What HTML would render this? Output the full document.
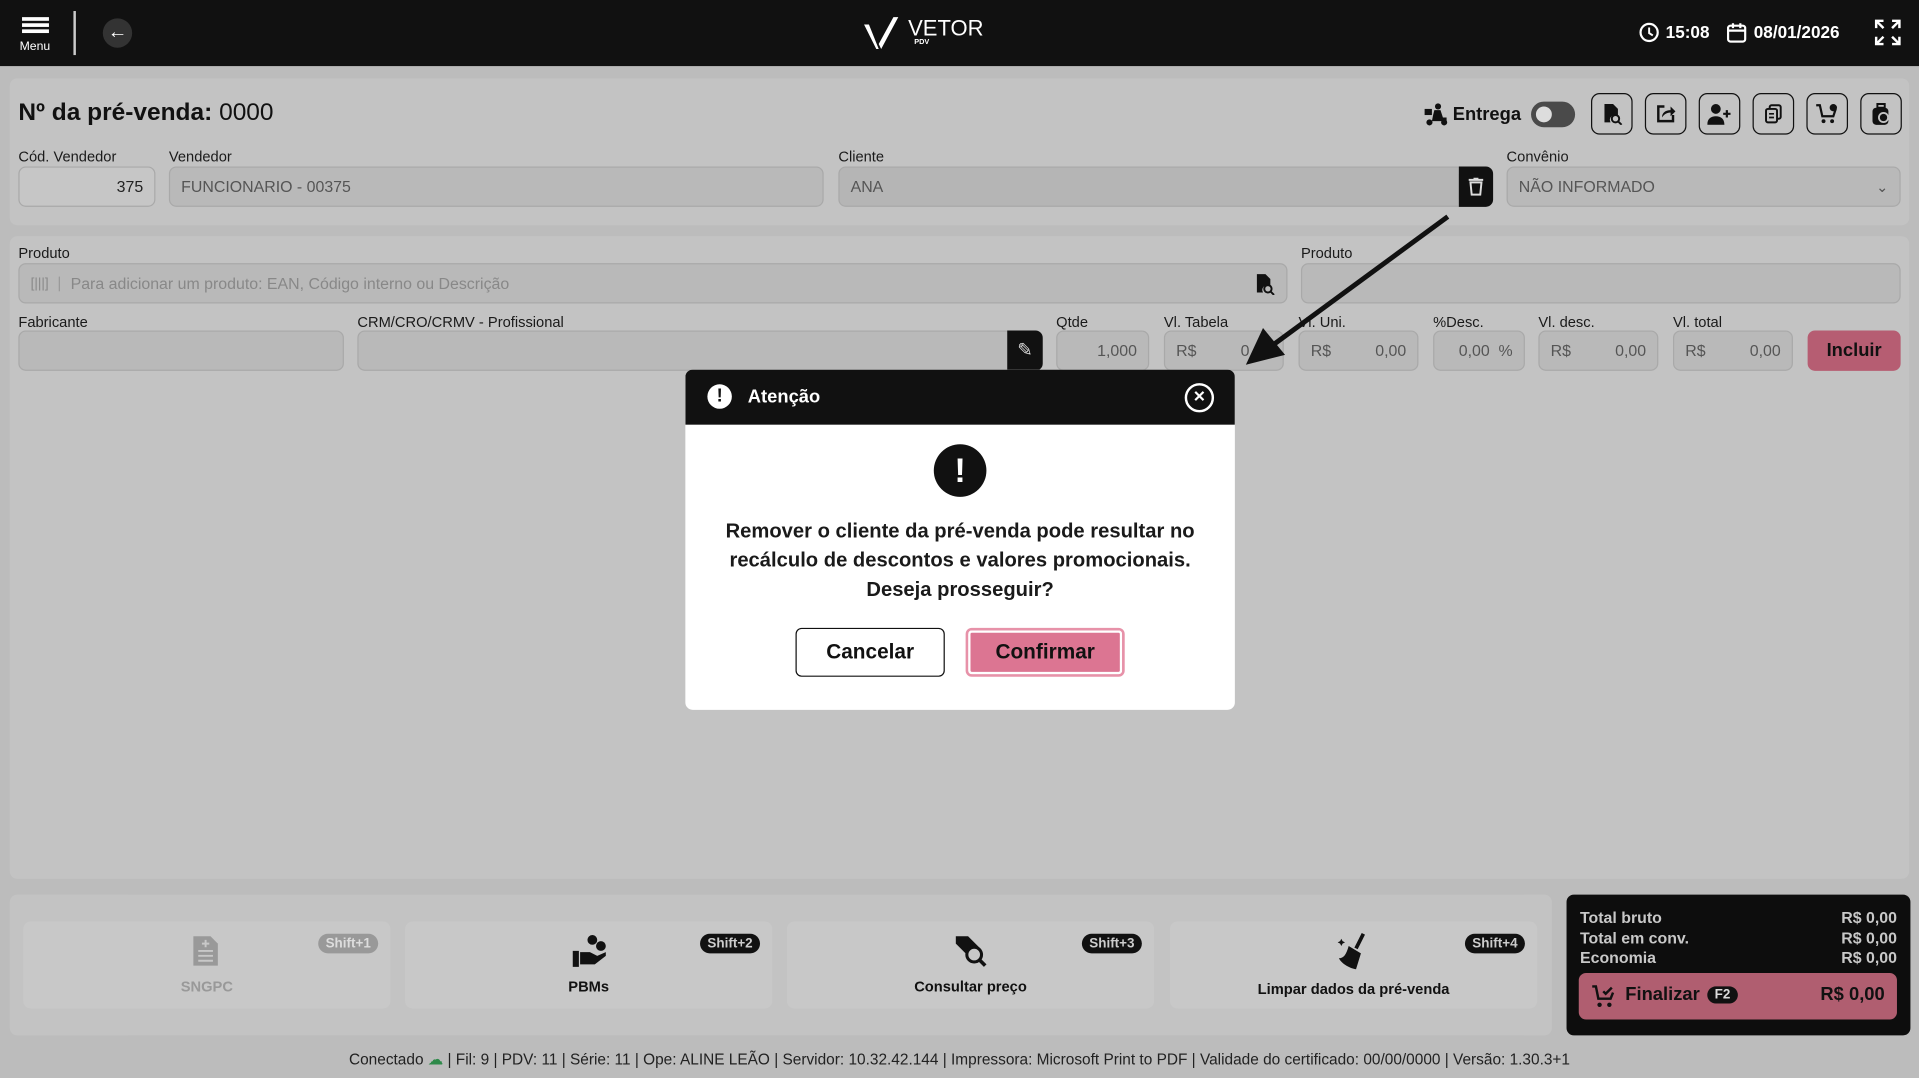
<!DOCTYPE html>
<html><head><meta charset="utf-8"><style>
*{box-sizing:border-box;margin:0;padding:0}
html,body{width:1919px;height:1078px;overflow:hidden;background:#bcbcbc}
#w{position:absolute;left:0;top:0;width:1568px;height:881px;transform:scale(1.22385);transform-origin:0 0;font-family:"Liberation Sans",sans-serif;color:#111;background:#bcbcbc}
.a{position:absolute}
.top{left:0;top:0;width:1568px;height:54px;background:#111;color:#fff}
.pn{background:#c3c3c3;border-radius:6px}
.lb{font-size:12px;color:#1a1a1a}
.in{border:1px solid #a9a9a9;background:#b9b9b9;border-radius:6px;font-size:13px;color:#555;padding:0 9px;display:flex;align-items:center}
.ib{width:34px;height:34px;border:1.5px solid #111;border-radius:7px;display:flex;align-items:center;justify-content:center}
.card{background:#c8c8c8;border-radius:6px;top:753px;height:71px;width:300px;font-size:12px;font-weight:bold;text-align:center}
.sh{position:absolute;top:10px;right:10px;background:#111;color:#ccc;font-size:11px;font-weight:bold;border-radius:9px;padding:2px 6px}
.card .t{position:absolute;left:0;right:0;top:46px}
</style></head><body><div id="w">
<div class="a top">
 <div class="a" style="left:18px;top:14px;width:22px;height:3px;background:#fff;box-shadow:0 5px 0 #fff,0 10px 0 #fff"></div>
 <div class="a" style="left:16px;top:33px;font-size:10px">Menu</div>
 <div class="a" style="left:60px;top:9px;width:2px;height:36px;background:#ccc"></div>
 <div class="a" style="left:84px;top:15px;width:24px;height:24px;border-radius:12px;background:#333;color:#fff;font-size:16px;text-align:center;line-height:23px">&#8592;</div>
 <svg class="a" style="left:704px;top:12px" width="34" height="30" viewBox="0 0 34 30"><path d="M2 8 L12 28 L14 28 L6 8Z M16 28 L30 2 L26 2 L14 24Z" fill="#fff"/></svg>
 <div class="a" style="left:742px;top:13px;font-size:18px">VETOR</div>
 <div class="a" style="left:747px;top:32px;font-size:6px;font-weight:bold">PDV</div>
 <svg class="a" style="left:1339px;top:18px" width="17" height="17" viewBox="0 0 17 17"><circle cx="8.5" cy="8.5" r="7" fill="none" stroke="#fff" stroke-width="1.8"/><path d="M8.5 4.5v4.5l3 2" fill="none" stroke="#fff" stroke-width="1.6"/></svg>
 <div class="a" style="left:1361px;top:18px;font-size:14px;font-weight:bold">15:08</div>
 <svg class="a" style="left:1411px;top:18px" width="16" height="17" viewBox="0 0 16 17"><rect x="1" y="3" width="14" height="13" rx="2" fill="none" stroke="#fff" stroke-width="1.8"/><path d="M1 7h14M5 1v4M11 1v4" stroke="#fff" stroke-width="1.8"/></svg>
 <div class="a" style="left:1433px;top:18px;font-size:14px;font-weight:bold">08/01/2026</div>
 <svg class="a" style="left:1531px;top:15px" width="23" height="23" viewBox="0 0 23 23" fill="none" stroke="#fff" stroke-width="2"><path d="M2 8V2h6M2 2l6 6M21 8V2h-6M21 2l-6 6M2 15v6h6M2 21l6-6M21 15v6h-6M21 21l-6-6"/></svg>
</div>

<div class="a pn" style="left:8px;top:64px;width:1552px;height:120px"></div>
<div class="a" style="left:15px;top:81px;font-size:20px"><b>Nº da pré-venda:</b> 0000</div>
<svg class="a" style="left:1164px;top:84px" width="20" height="19" viewBox="0 0 20 19"><circle cx="11" cy="3" r="2.5" fill="#111"/><rect x="0" y="5" width="6" height="5" fill="#111"/><path d="M8 6h5l2 6h3v3H6l1-5z" fill="#111"/><circle cx="4" cy="16" r="2.5" fill="#111"/><circle cx="16" cy="16" r="2.5" fill="#111"/></svg>
<div class="a" style="left:1187px;top:85px;font-size:15px;font-weight:bold">Entrega</div>
<div class="a" style="left:1251px;top:83px;width:36px;height:21px;border-radius:11px;background:#4a4a4a"><div class="a" style="left:4px;top:4px;width:13px;height:13px;border-radius:50%;background:#ddd"></div></div>
<div class="a ib" style="left:1300px;top:76px"><svg width="18" height="18" viewBox="0 0 18 18"><path d="M3 1h7l4 4v5h-2a4 4 0 0 0-4 6H3z" fill="#111"/><circle cx="12" cy="13" r="3" fill="none" stroke="#111" stroke-width="1.6"/><path d="M14 15l3 3" stroke="#111" stroke-width="1.6"/></svg></div>
<div class="a ib" style="left:1344px;top:76px"><svg width="18" height="18" viewBox="0 0 18 18"><path d="M8 3H3v12h12v-5" fill="none" stroke="#111" stroke-width="2"/><path d="M6 12c0-4 3-6 7-6V3l4 4-4 4V8c-3 0-5 1-7 4z" fill="#111"/></svg></div>
<div class="a ib" style="left:1388px;top:76px"><svg width="20" height="18" viewBox="0 0 20 18"><circle cx="7" cy="5" r="4" fill="#111"/><path d="M0 18c0-5 3-7 7-7s7 2 7 7z" fill="#111"/><path d="M16 6v6M13 9h6" stroke="#111" stroke-width="1.8"/></svg></div>
<div class="a ib" style="left:1432px;top:76px"><svg width="18" height="18" viewBox="0 0 18 18"><rect x="6" y="2" width="9" height="11" rx="1.5" fill="none" stroke="#111" stroke-width="1.6"/><rect x="3" y="5" width="9" height="11" rx="1.5" fill="#c3c3c3" stroke="#111" stroke-width="1.6"/><path d="M5.5 9h4M5.5 12h4" stroke="#111" stroke-width="1.4"/></svg></div>
<div class="a ib" style="left:1476px;top:76px"><svg width="20" height="18" viewBox="0 0 20 18"><path d="M1 2h3l2 9h9l2-6" fill="none" stroke="#111" stroke-width="1.8"/><circle cx="7" cy="15" r="1.6" fill="#111"/><circle cx="14" cy="15" r="1.6" fill="#111"/><circle cx="15" cy="4" r="3" fill="#111"/></svg></div>
<div class="a ib" style="left:1520px;top:76px"><svg width="18" height="20" viewBox="0 0 18 20"><path d="M6 2h6v3H6z" fill="none" stroke="#111" stroke-width="1.6"/><rect x="2" y="5" width="13" height="14" rx="3" fill="#111"/><circle cx="11" cy="13" r="4.5" fill="#c3c3c3"/><circle cx="11" cy="13" r="3" fill="#111"/></svg></div>

<div class="a lb" style="left:15px;top:121px">Cód. Vendedor</div>
<div class="a in" style="left:15px;top:136px;width:112px;height:33px;background:#c6c6c6;justify-content:flex-end;color:#222">375</div>
<div class="a lb" style="left:138px;top:121px">Vendedor</div>
<div class="a in" style="left:138px;top:136px;width:535px;height:33px">FUNCIONARIO - 00375</div>
<div class="a lb" style="left:685px;top:121px">Cliente</div>
<div class="a in" style="left:685px;top:136px;width:535px;height:33px;background:#b5b5b5">ANA</div>
<div class="a" style="left:1192px;top:136px;width:28px;height:33px;background:#111;border-radius:0 6px 6px 0"><svg class="a" style="left:8px;top:9px" width="12" height="15" viewBox="0 0 12 15"><path d="M0 2h12M4 1h4" stroke="#ddd" stroke-width="1.6"/><path d="M1.5 4h9l-1 10h-7z" fill="none" stroke="#ddd" stroke-width="1.6"/></svg></div>
<div class="a lb" style="left:1231px;top:121px">Convênio</div>
<div class="a in" style="left:1231px;top:136px;width:322px;height:33px">NÃO INFORMADO<span style="margin-left:auto;font-size:12px">&#8964;</span></div>

<div class="a pn" style="left:8px;top:193px;width:1552px;height:525px"></div>
<div class="a lb" style="left:15px;top:200px">Produto</div>
<div class="a in" style="left:15px;top:215px;width:1037px;height:33px;color:#888"><span style="font-size:11px;border-right:1px solid #999;padding-right:8px;margin-right:9px">[|||]</span>Para adicionar um produto: EAN, Código interno ou Descrição<svg style="margin-left:auto" width="18" height="18" viewBox="0 0 18 18"><path d="M3 1h7l4 4v5h-2a4 4 0 0 0-4 6H3z" fill="#111"/><circle cx="12" cy="13" r="3" fill="none" stroke="#111" stroke-width="1.6"/><path d="M14 15l3 3" stroke="#111" stroke-width="1.6"/></svg></div>
<div class="a lb" style="left:1063px;top:200px">Produto</div>
<div class="a in" style="left:1063px;top:215px;width:490px;height:33px"></div>
<div class="a lb" style="left:15px;top:256px">Fabricante</div>
<div class="a in" style="left:15px;top:270px;width:266px;height:33px"></div>
<div class="a lb" style="left:292px;top:256px">CRM/CRO/CRMV - Profissional</div>
<div class="a in" style="left:292px;top:270px;width:560px;height:33px"></div>
<div class="a" style="left:823px;top:270px;width:29px;height:33px;background:#111;border-radius:0 6px 6px 0;color:#ddd;text-align:center;line-height:33px;font-size:15px">&#9998;</div>
<div class="a lb" style="left:863px;top:256px">Qtde</div>
<div class="a in" style="left:863px;top:270px;width:76px;height:33px;justify-content:flex-end">1,000</div>
<div class="a lb" style="left:951px;top:256px">Vl. Tabela</div>
<div class="a in" style="left:951px;top:270px;width:98px;height:33px">R$<span style="margin-left:auto">0,00</span></div>
<div class="a lb" style="left:1061px;top:256px">Vl. Uni.</div>
<div class="a in" style="left:1061px;top:270px;width:98px;height:33px">R$<span style="margin-left:auto">0,00</span></div>
<div class="a lb" style="left:1171px;top:256px">%Desc.</div>
<div class="a in" style="left:1171px;top:270px;width:75px;height:33px;justify-content:flex-end">0,00 &nbsp;%</div>
<div class="a lb" style="left:1257px;top:256px">Vl. desc.</div>
<div class="a in" style="left:1257px;top:270px;width:98px;height:33px">R$<span style="margin-left:auto">0,00</span></div>
<div class="a lb" style="left:1367px;top:256px">Vl. total</div>
<div class="a in" style="left:1367px;top:270px;width:98px;height:33px">R$<span style="margin-left:auto">0,00</span></div>
<div class="a" style="left:1477px;top:270px;width:76px;height:33px;background:#b65d72;border-radius:6px;font-size:15px;font-weight:bold;text-align:center;line-height:33px">Incluir</div>

<svg class="a" style="left:1010px;top:170px" width="180" height="140" viewBox="0 0 180 140"><path d="M173 7 L30 112" stroke="#111" stroke-width="4"/><path d="M8 128 L22 98 L40 120Z" fill="#111"/></svg>

<div class="a pn" style="left:8px;top:731px;width:1260px;height:115px"></div>
<div class="a card" style="left:19px;color:#999"><div class="sh" style="background:#999;color:#ddd">Shift+1</div><svg class="a" style="left:138px;top:11px" width="22" height="26" viewBox="0 0 22 26"><path d="M1 1h14l6 6v18H1z" fill="#999"/><path d="M5 13h12M5 17h12M5 21h12M11 4v6M8 7h6" stroke="#c8c8c8" stroke-width="1.6"/></svg><div class="t">SNGPC</div></div>
<div class="a card" style="left:331px"><div class="sh">Shift+2</div><svg class="a" style="left:136px;top:10px" width="30" height="28" viewBox="0 0 30 28"><circle cx="17" cy="5" r="4" fill="#111"/><circle cx="24" cy="10" r="4" fill="#111"/><path d="M1 14h5v13H1zM7 15h8l6 3 7-3v3l-9 7H7z" fill="#111"/></svg><div class="t">PBMs</div></div>
<div class="a card" style="left:643px"><div class="sh">Shift+3</div><svg class="a" style="left:136px;top:10px" width="28" height="28" viewBox="0 0 28 28"><path d="M2 2h10l10 10-8 8L2 8z" fill="#111"/><circle cx="17" cy="17" r="6" fill="#c8c8c8" stroke="#111" stroke-width="2.5"/><path d="M21 21l5 5" stroke="#111" stroke-width="3"/></svg><div class="t">Consultar preço</div></div>
<div class="a card" style="left:956px"><div class="sh">Shift+4</div><svg class="a" style="left:136px;top:8px" width="28" height="32" viewBox="0 0 28 32"><path d="M22 2l-6 12" stroke="#111" stroke-width="3"/><path d="M10 12l10 6-4 13C10 30 4 26 2 22c4 0 6-3 8-10z" fill="#111"/><path d="M4 6l1 2 2 1-2 1-1 2-1-2-2-1 2-1z" fill="#111"/></svg><div class="t" style="top:48px">Limpar dados da pré-venda</div></div>

<div class="a" style="left:1280px;top:731px;width:281px;height:115px;background:#0d0d0d;border-radius:6px;color:#c8c8c8;font-size:13px;font-weight:bold">
 <div class="a" style="left:11px;top:11px">Total bruto</div><div class="a" style="right:11px;top:11px">R$ 0,00</div>
 <div class="a" style="left:11px;top:28px">Total em conv.</div><div class="a" style="right:11px;top:28px">R$ 0,00</div>
 <div class="a" style="left:11px;top:44px">Economia</div><div class="a" style="right:11px;top:44px">R$ 0,00</div>
 <div class="a" style="left:10px;top:64px;width:260px;height:38px;background:#b05e70;border-radius:6px;color:#111">
  <svg class="a" style="left:10px;top:9px" width="22" height="21" viewBox="0 0 22 21"><path d="M1 2h3l2 10h10l2-5" fill="none" stroke="#111" stroke-width="2"/><circle cx="7" cy="17" r="1.8" fill="#111"/><circle cx="15" cy="17" r="1.8" fill="#111"/><path d="M10 6l2 2 5-5" fill="none" stroke="#111" stroke-width="2"/></svg>
  <div class="a" style="left:38px;top:9px;font-size:15px;font-weight:600">Finalizar</div>
  <div class="a" style="left:105px;top:11px;background:#111;color:#ddd;border-radius:8px;font-size:11px;padding:1px 6px">F2</div>
  <div class="a" style="right:10px;top:9px;font-size:15px">R$ 0,00</div>
 </div>
</div>

<div class="a" style="left:0;width:1568px;top:858px;text-align:center;font-size:12.6px;color:#222">Conectado <span style="color:#2e8a4a">&#9729;</span> | Fil: 9 | PDV: 11 | Série: 11 | Ope: ALINE LEÃO | Servidor: 10.32.42.144 | Impressora: Microsoft Print to PDF | Validade do certificado: 00/00/0000 | Versão: 1.30.3+1</div>

<div class="a" style="left:560px;top:302px;width:449px;height:278px;background:#fff;border-radius:6px;overflow:hidden">
 <div class="a" style="left:0;top:0;width:449px;height:45px;background:#111;color:#fff">
  <div class="a" style="left:18px;top:12px;width:20px;height:20px;border-radius:50%;background:#fff;color:#111;text-align:center;font-weight:bold;font-size:15px;line-height:20px">!</div>
  <div class="a" style="left:51px;top:14px;font-size:15px;font-weight:bold">Atenção</div>
  <div class="a" style="left:408px;top:11px;width:24px;height:24px;border-radius:50%;border:2px solid #fff;text-align:center;line-height:20px;font-size:16px;font-weight:bold">&#215;</div>
 </div>
 <div class="a" style="left:203px;top:61px;width:43px;height:43px;border-radius:50%;background:#111;color:#fff;text-align:center;font-weight:bold;font-size:28px;line-height:43px">!</div>
 <div class="a" style="left:0;width:449px;top:120px;text-align:center;font-size:16.5px;line-height:24px;font-weight:bold;color:#1a1a1a">Remover o cliente da pré-venda pode resultar no<br>recálculo de descontos e valores promocionais.<br>Deseja prosseguir?</div>
 <div class="a" style="left:90px;top:211px;width:122px;height:40px;border:1.5px solid #111;border-radius:5px;text-align:center;line-height:37px;font-size:17px;font-weight:bold">Cancelar</div>
 <div class="a" style="left:229px;top:211px;width:130px;height:40px;background:#dc7592;border:2.5px solid #e792a9;box-shadow:inset 0 0 0 2px #fff;border-radius:5px;text-align:center;line-height:36px;font-size:17px;font-weight:bold">Confirmar</div>
</div>
</div></body></html>
